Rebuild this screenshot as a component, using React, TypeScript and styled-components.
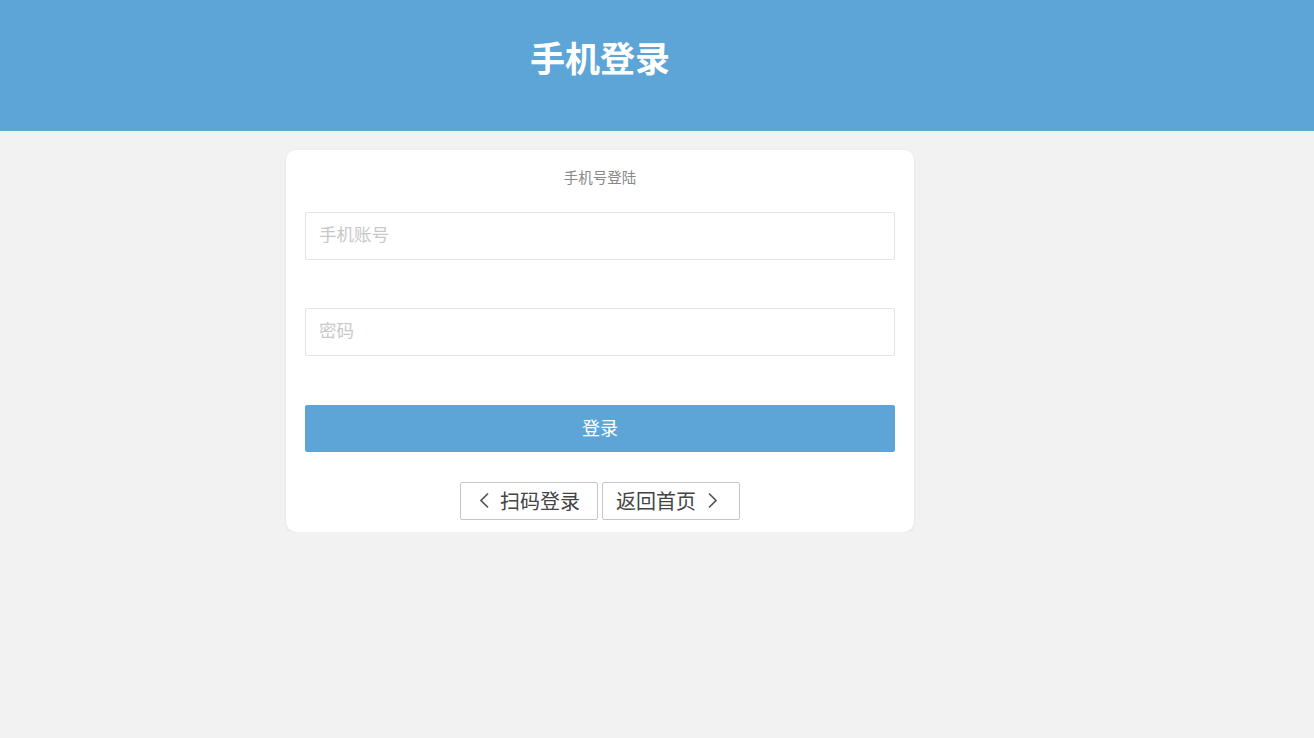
import styled, { createGlobalStyle } from 'styled-components';

const GlobalStyle = createGlobalStyle`
  html, body {
    margin: 0;
    padding: 0;
    background: #f2f2f2;
    font-family: 'Noto Sans CJK SC', 'Noto Sans', 'Liberation Sans', sans-serif;
  }
  * {
    box-sizing: border-box;
  }
`;

const Header = styled.header`
  height: 131px;
  background: #5ea5d7;
`;
const HeaderInner = styled.div`
  width: 1200px;
  padding-top: 35px;
  text-align: center;
`;
const Title = styled.h1`
  margin: 0;
  font-size: 35px;
  line-height: 44px;
  font-weight: 700;
  color: #fff;
`;

const Page = styled.div`
  width: 1200px;
  padding-top: 19px;
`;
const Card = styled.div`
  width: 628px;
  margin: 0 auto;
  padding: 17px 19px 12px;
  background: #fff;
  border-radius: 10px;
  box-shadow: 0 1px 3px rgba(0, 0, 0, 0.08);
`;
const SubTitle = styled.div`
  font-size: 14.5px;
  line-height: 20px;
  color: #888;
  text-align: center;
  margin-bottom: 25px;
`;
const Input = styled.input<{ $gap: number }>`
  display: block;
  width: 100%;
  height: 48px;
  margin-bottom: ${(p) => p.$gap}px;
  padding: 0 13px 5px;
  border: 1px solid #e3e3e3;
  border-radius: 2px;
  font-family: inherit;
  font-size: 17.5px;
  color: #333;
  outline: none;
  &::placeholder {
    color: #c8c8c8;
  }
`;
const SubmitButton = styled.button`
  display: block;
  width: 100%;
  height: 47px;
  padding: 0 0 3px;
  border: none;
  border-radius: 2px;
  background: #5ea5d7;
  color: #fff;
  font-family: inherit;
  font-size: 18px;
  cursor: pointer;
`;
const LinkRow = styled.div`
  display: flex;
  justify-content: center;
  gap: 4px;
  margin-top: 30px;
`;
const LinkButton = styled.a<{ $left: number }>`
  display: flex;
  align-items: center;
  width: 138px;
  height: 38px;
  padding: 0 0 2px ${(p) => p.$left}px;
  border: 1px solid #c6c6c6;
  border-radius: 2px;
  background: #fff;
  color: #444;
  font-size: 20px;
  text-decoration: none;
  cursor: pointer;
`;
const Chevron = styled.svg<{ $space: number; $before?: boolean }>`
  width: 11px;
  height: 17px;
  flex: none;
  ${(p) => (p.$before ? `margin-right: ${p.$space}px;` : `margin-left: ${p.$space}px;`)}
`;

const ChevronLeft = () => (
  <Chevron $before $space={10} viewBox='0 0 11 17'>
    <polyline points='9,1.5 2,8.5 9,15.5' fill='none' stroke='#555' strokeWidth='1.7' />
  </Chevron>
);

const ChevronRight = () => (
  <Chevron $space={11} viewBox='0 0 11 17'>
    <polyline points='2,1.5 9,8.5 2,15.5' fill='none' stroke='#555' strokeWidth='1.7' />
  </Chevron>
);

const App = () => {
  return (
    <>
      <GlobalStyle />
      <Header>
        <HeaderInner>
          <Title>手机登录</Title>
        </HeaderInner>
      </Header>
      <Page>
        <Card>
          <SubTitle>手机号登陆</SubTitle>
          <Input $gap={48} type='text' placeholder='手机账号' />
          <Input $gap={49} type='password' placeholder='密码' />
          <SubmitButton>登录</SubmitButton>
          <LinkRow>
            <LinkButton $left={18}>
              <ChevronLeft />
              扫码登录
            </LinkButton>
            <LinkButton $left={13}>
              返回首页
              <ChevronRight />
            </LinkButton>
          </LinkRow>
        </Card>
      </Page>
    </>
  );
};

export default App;
